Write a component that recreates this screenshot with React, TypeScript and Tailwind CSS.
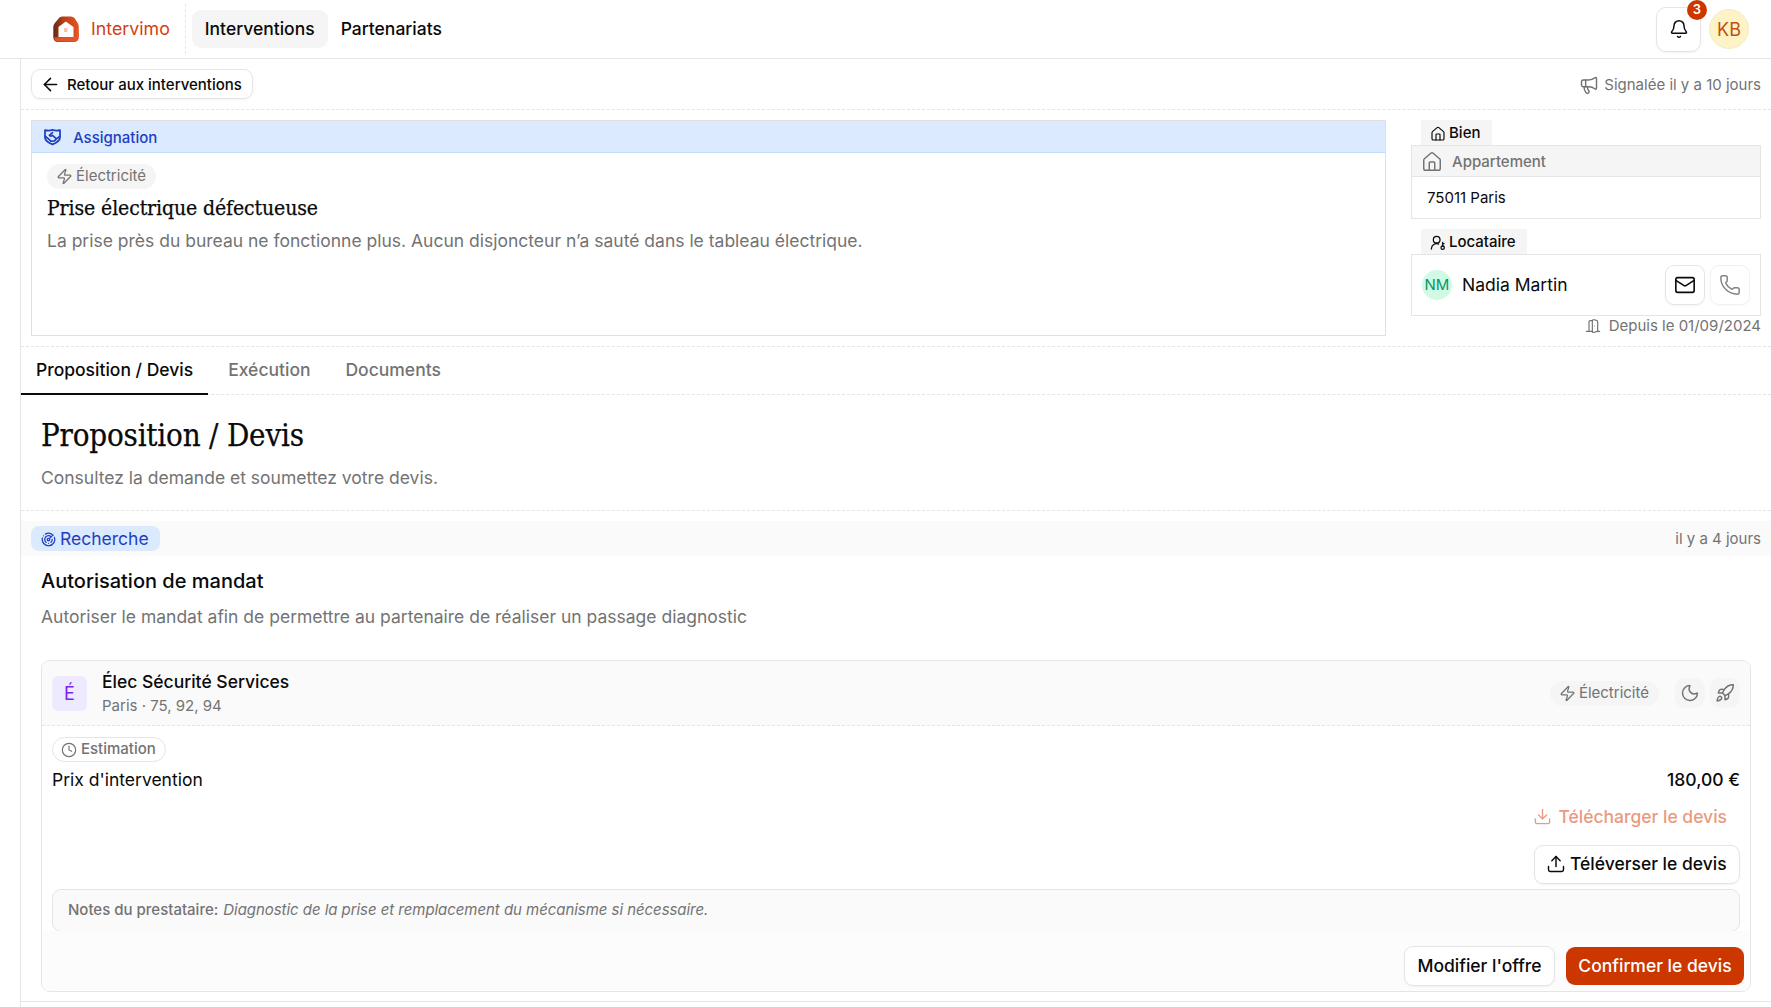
import {
  ArrowLeft,
  Bell,
  Clock,
  DoorOpen,
  Download,
  House,
  Mail,
  Megaphone,
  Moon,
  Phone,
  Radar,
  Rocket,
  Upload,
  Zap,
} from "lucide-react";

const serif = "font-['DejaVu_Serif_Condensed','DejaVu_Serif',serif] [-webkit-text-stroke:0.25px]";

const Logo = () => (
  <svg viewBox="0 0 26 26" className="h-[26px] w-[26px] shrink-0">
    <defs>
      <linearGradient id="ring" x1="0" y1="0.5" x2="1" y2="0.5">
        <stop offset="0" stopColor="#5f2a14" />
        <stop offset="0.4" stopColor="#b83f18" />
        <stop offset="1" stopColor="#ea541f" />
      </linearGradient>
    </defs>
    <path
      d="M9 0.5 L18 0.5 Q20 0.5 21.5 2 L25 7.5 Q25.8 9 25.8 11 L25.8 21 Q25.8 26 20.5 26 L5.5 26 Q0.3 26 0.3 21 L0.3 11 Q0.3 9 1.5 7.5 L6 2 Q7 0.5 9 0.5 Z"
      fill="url(#ring)"
    />
    <path d="M12.8 5.5 L20.5 11 L20.5 21 L5.5 21 L5.5 11 Z" fill="#fff" />
    <path d="M1 21.5 L20.5 21 L25.5 16 L25.5 21 Q25.5 25.5 20.5 25.5 L6 25.5 Q1.5 25.5 1 21.5 Z" fill="#e0562a" />
    <rect x="11" y="12" width="3.5" height="4" fill="#f6c4ae" />
  </svg>
);

const ShieldShake = () => (
  <svg
    viewBox="0 0 24 24"
    fill="none"
    stroke="currentColor"
    strokeWidth="2.2"
    strokeLinecap="round"
    strokeLinejoin="round"
    className="h-[19px] w-[19px] shrink-0"
  >
    <path d="M12 3.5 C9 5 6 5 2.5 4 L2.5 13 C2.5 17 7 20 12 22 C17 20 21.5 17 21.5 13 L21.5 4 C18 5 15 5 12 3.5 Z" />
    <path d="M12 7 L8 10.5 Q9.5 12.5 12 10.5 L17 15 M10 18 L14.5 17.5 L17 15 L21 12" />
    <path d="M3 12 L7 15 L10 18" />
  </svg>
);

const UserKey = () => (
  <svg
    viewBox="0 0 24 24"
    fill="none"
    stroke="currentColor"
    strokeWidth="1.9"
    strokeLinecap="round"
    strokeLinejoin="round"
    className="size-[16px] shrink-0"
  >
    <circle cx="10" cy="7" r="5" />
    <path d="M2 21a8 8 0 0 1 11-7.4" />
    <circle cx="19" cy="19" r="2.5" />
    <path d="M19 16.5V11M19 13h2" />
  </svg>
);

const Chip = ({ label }: { label: string }) => (
  <span className="flex h-[25px] items-center gap-[3px] rounded-full bg-[#f5f5f5] pr-[10px] pl-[9px] text-[15px] text-[#737373]">
    <Zap className="size-[17px]" strokeWidth={1.75} />
    {label}
  </span>
);

export default function App() {
  return (
    <div className="h-[1007px] w-full overflow-hidden bg-white font-['Inter',sans-serif] text-[#0a0a0a]">
      <header className="flex h-[59px] items-center border-b border-[#e5e5e5] pr-[22px]">
        <div className="ml-[53px] flex items-center gap-3">
          <Logo />
          <span className="text-[17.8px] text-[#d4400f]">Intervimo</span>
        </div>
        <div className="mr-[6px] ml-[15px] h-[50px] border-l border-dashed border-[#e5e5e5]" />
        <nav className="flex items-center text-[17.5px] font-medium">
          <a className="flex h-[38px] items-center rounded-[9px] bg-[#f5f5f5] px-[13px]">Interventions</a>
          <a className="flex h-[38px] items-center px-[13px]">Partenariats</a>
        </nav>
        <div className="ml-auto flex items-center gap-2">
          <button className="relative flex size-[45px] items-center justify-center rounded-[10px] border border-[#e5e5e5] shadow-xs">
            <Bell className="size-5" strokeWidth={1.75} />
            <span className="absolute top-[-8px] right-[-7px] flex size-5 items-center justify-center rounded-full bg-[#cc3700] text-[13px] font-semibold text-white">
              3
            </span>
          </button>
          <div className="flex size-10 items-center justify-center rounded-full border border-[#f3eccb] bg-[#fef3c7] text-[18px] text-[#c2500c]">
            KB
          </div>
        </div>
      </header>

      <div className="flex h-[948px]">
        <div className="w-[21px] shrink-0 border-r border-[#e5e5e5]" />
        <main className="h-[943px] min-w-0 flex-1 border-b border-[#e5e5e5]">
          <div className="flex h-[51px] items-center justify-between border-b border-dashed border-[#e5e5e5] pr-[10px] pl-[10px]">
            <button className="flex h-[30px] w-[222px] items-center gap-[6px] rounded-[9px] border border-[#e5e5e5] pl-[8px] text-[15px] font-medium shadow-xs">
              <ArrowLeft className="size-[21px]" strokeWidth={1.75} />
              <span className="pt-[2px]">Retour aux interventions</span>
            </button>
            <span className="flex items-center gap-[5px] pt-[2px] text-[15px] text-[#737373]">
              <Megaphone className="size-5" strokeWidth={1.75} />
              Signalée il y a 10 jours
            </span>
          </div>

          <section className="flex h-[237px] items-start gap-[25px] border-b border-dashed border-[#e5e5e5] pt-[10px] pr-[10px] pl-[10px]">
            <div className="h-[216px] flex-1 border border-[#e0e0e0]">
              <div className="flex h-[32px] items-center gap-[11px] border-b border-[#bfdbfe] bg-[#dbeafe] pl-[11px] text-[15px] font-medium text-[#1d3fc4]">
                <ShieldShake />
                <span className="pt-[3px]">Assignation</span>
              </div>
              <div className="px-[15px] pt-[11px]">
                <div className="flex">
                  <Chip label="Électricité" />
                </div>
                <h2 className={`${serif} mt-[4px] text-[21px] leading-[30px] tracking-[-0.1px] text-[#0a0a0a]`}>Prise électrique défectueuse</h2>
                <p className="mt-[6px] text-[17.5px] leading-6 text-[#737373]">
                  La prise près du bureau ne fonctionne plus. Aucun disjoncteur n’a sauté dans le tableau électrique.
                </p>
              </div>
            </div>

            <aside className="w-[350px] shrink-0">
              <div className="ml-[10px] flex h-[25px] w-[71px] items-center gap-[3px] bg-[#f5f5f5] pt-[2px] pl-[9px] text-[15px] font-medium">
                <House className="size-[16px]" strokeWidth={1.75} />
                Bien
              </div>
              <div className="h-[74px] border border-[#e5e5e5]">
                <div className="flex h-[31px] items-center gap-[9px] border-b border-[#e5e5e5] bg-[#f5f5f5] pt-[2px] pl-[9px] text-[15px] font-medium text-[#737373]">
                  <House className="size-[22px]" strokeWidth={1.6} />
                  Appartement
                </div>
                <div className="flex h-[41px] items-center pt-[2px] pl-[15px] text-[15px]">75011 Paris</div>
              </div>
              <div className="mt-[10px] ml-[10px] flex h-[25px] w-[106px] items-center gap-[3px] bg-[#f5f5f5] pt-[2px] pl-[9px] text-[15px] font-medium">
                <UserKey />
                Locataire
              </div>
              <div className="flex h-[62px] items-center border border-[#e5e5e5] pr-[10px] pl-[10px]">
                <div className="flex size-[30px] items-center justify-center rounded-full bg-[#d1fae5] text-[15px] text-[#059669]">NM</div>
                <span className="ml-[10px] text-[17.5px]">Nadia Martin</span>
                <button className="ml-auto flex size-10 items-center justify-center rounded-[9px] border border-[#e5e5e5] shadow-xs">
                  <Mail className="size-[22px]" strokeWidth={1.75} />
                </button>
                <button className="ml-[5px] flex size-10 items-center justify-center rounded-[9px] border border-[#e5e5e5] opacity-50 shadow-xs">
                  <Phone className="size-[22px]" strokeWidth={1.6} />
                </button>
              </div>
              <div className="flex h-[20px] items-center justify-end gap-[8px] text-[15px] text-[#737373]">
                <DoorOpen className="size-[16px]" strokeWidth={1.75} />
                Depuis le 01/09/2024
              </div>
            </aside>
          </section>

          <div className="flex h-[48px] items-stretch gap-[5px] border-b border-dashed border-[#e5e5e5] text-[17.5px] font-medium">
            <a className="mb-[-1px] flex items-center border-b-2 border-[#0a0a0a] px-[15px]">Proposition / Devis</a>
            <a className="flex items-center px-[15px] pb-px text-[#737373]">Exécution</a>
            <a className="flex items-center px-[15px] pb-px text-[#737373]">Documents</a>
          </div>

          <div className="h-[116px] border-b border-dashed border-[#e5e5e5] px-[20px] pt-[18px]">
            <h1 className={`${serif} text-[31px] leading-[44px] tracking-[-0.2px]`}>Proposition / Devis</h1>
            <p className="mt-[7px] text-[17.5px] leading-7 text-[#737373]">Consultez la demande et soumettez votre devis.</p>
          </div>

          <div className="mt-[10px] flex h-[35px] items-center justify-between bg-[#fafafa] pr-[10px] pl-[10px]">
            <span className="flex h-[25px] items-center gap-[4px] rounded-lg bg-[#dbeafe] pt-px pr-[11px] pl-[10px] text-[17.5px] text-[#1d3fc4]">
              <Radar className="size-[15px]" strokeWidth={2} />
              Recherche
            </span>
            <span className="pt-[2px] text-[15px] text-[#737373]">il y a 4 jours</span>
          </div>

          <div className="px-[20px]">
            <h3 className="mt-[11px] text-[20px] leading-7 font-medium">Autorisation de mandat</h3>
            <p className="mt-[8px] text-[17.5px] leading-7 text-[#737373]">
              Autoriser le mandat afin de permettre au partenaire de réaliser un passage diagnostic
            </p>

            <div className="mt-[29px] h-[332px] overflow-hidden rounded-[9px] border border-[#e5e5e5]">
              <div className="flex h-[65px] items-center border-b border-dashed border-[#e5e5e5] bg-[#fafafa] pr-[10px] pl-[10px]">
                <div className="flex size-[35px] items-center justify-center rounded-md border border-[#f0ecfb] bg-[#ede9fe] text-[18px] text-[#7c1ff0]">É</div>
                <div className="ml-[15px] pt-[2px]">
                  <div className="text-[17.5px] leading-6 font-medium">Élec Sécurité Services</div>
                  <div className="text-[15px] leading-6 text-[#737373]">Paris · 75, 92, 94</div>
                </div>
                <div className="ml-auto flex items-center gap-[5px]">
                  <div className="mr-[11px]">
                    <Chip label="Électricité" />
                  </div>
                  <span className="flex size-[30px] items-center justify-center rounded-[10px] bg-[#f5f5f5] text-[#737373]">
                    <Moon className="size-5" strokeWidth={1.75} />
                  </span>
                  <span className="flex size-[30px] items-center justify-center rounded-[10px] bg-[#f5f5f5] text-[#737373]">
                    <Rocket className="size-5" strokeWidth={1.75} />
                  </span>
                </div>
              </div>

              <div className="h-[205px] bg-white px-[10px] pt-[11px]">
                <span className="inline-flex h-[25px] items-center gap-[4px] rounded-full border border-[#e5e5e5] pr-[9px] pl-[8px] text-[15px] font-medium text-[#737373]">
                  <Clock className="size-4" strokeWidth={1.75} />
                  Estimation
                </span>
                <div className="mt-[2px] flex items-center justify-between text-[17.5px] leading-7">
                  <span>Prix d'intervention</span>
                  <span className="font-medium">180,00 €</span>
                </div>
                <div className="mt-[9px] flex justify-end">
                  <a className="mr-[13px] flex items-center gap-[6px] text-[17.5px] leading-7 font-medium text-[#ea9a80]">
                    <Download className="size-[19px]" strokeWidth={1.75} />
                    Télécharger le devis
                  </a>
                </div>
                <div className="mt-[14px] flex justify-end">
                  <button className="flex h-[39px] w-[206px] items-center gap-[4px] rounded-[9px] border border-[#e5e5e5] pl-[11px] text-[17.5px] font-medium shadow-xs">
                    <Upload className="size-5" strokeWidth={1.75} />
                    Téléverser le devis
                  </button>
                </div>
                <div className="mt-[5px] flex h-[43px] items-center rounded-[9px] border border-[#e5e5e5] bg-[#fafafa] pl-[15px] text-[15px] text-[#737373]">
                  <span className="font-medium">Notes du prestataire:</span>
                  <em className="ml-[5px] tracking-[-0.05px]">Diagnostic de la prise et remplacement du mécanisme si nécessaire.</em>
                </div>
              </div>

              <div className="flex h-[60px] items-center justify-end gap-[11px] bg-[#fcfcfc] pt-[10px] pr-[6px]">
                <button className="h-[40px] w-[151px] rounded-[9px] border border-[#e5e5e5] bg-white text-[17.5px] font-medium shadow-xs">Modifier l'offre</button>
                <button className="h-[38px] w-[178px] rounded-[9px] bg-[#cc3700] text-[17.5px] font-medium text-white">Confirmer le devis</button>
              </div>
            </div>
          </div>
        </main>
      </div>
    </div>
  );
}
